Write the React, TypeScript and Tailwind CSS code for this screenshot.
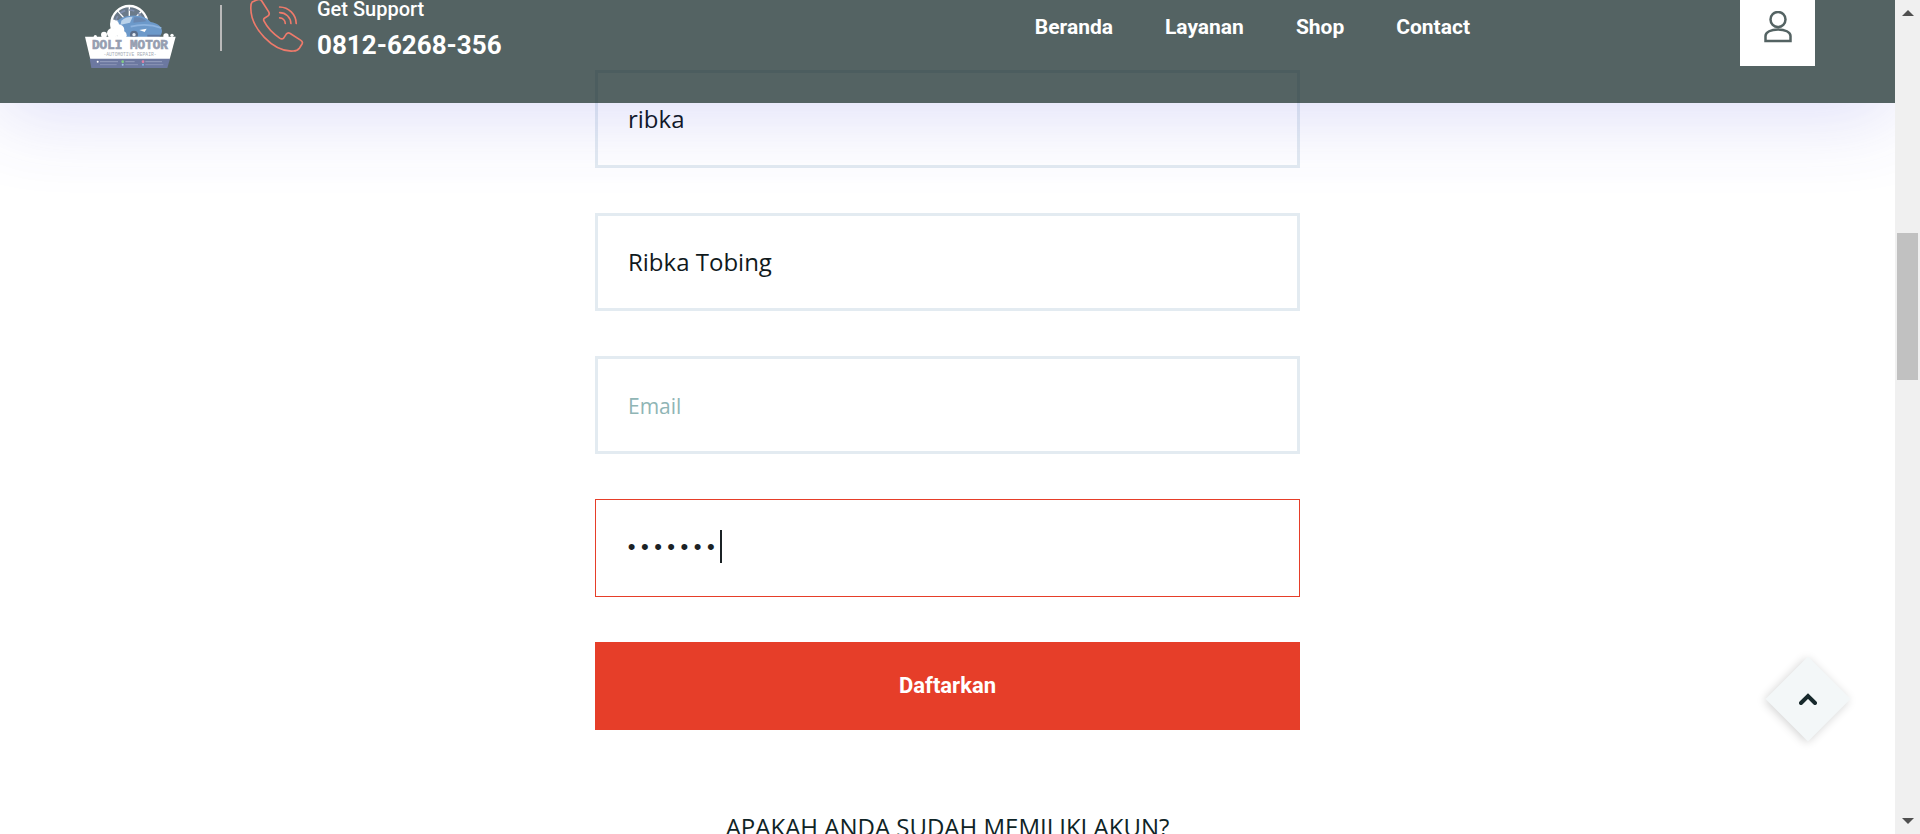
import { useState } from "react";

const navLinks = ["Beranda", "Layanan", "Shop", "Contact"];

const fieldClass =
  "block h-[98px] w-full border-[3px] border-[#e3ebf1] bg-white px-[30px] pb-0.5 font-['Open_Sans',sans-serif] text-2xl text-[#10191c] outline-none placeholder:text-[21px] placeholder:text-[#8fb5b5]";

function Logo() {
  return (
    <svg viewBox="0 0 276 192" className="h-16 w-[92px]" role="img" aria-label="Doli Motor">
      <circle cx="136" cy="60" r="54" fill="#4d6490" fillOpacity="0.5" stroke="#fff" strokeWidth="7" />
      <g stroke="#fff" strokeWidth="4">
        <path d="M136 60V8M136 60L100 20M136 60L174 20M136 60L84 48M136 60L188 44" />
      </g>
      <circle cx="136" cy="60" r="42" fill="none" stroke="#4a5f8c" strokeWidth="5" strokeDasharray="16 12" />
      <path d="M98 52c12-10 20-14 34-16 34-6 56 4 68 18 20 4 32 12 34 26 0 12-8 20-22 22l-64 4-44-16z" fill="#2f6fb5" />
      <path d="M112 50c10-10 22-12 34-12l-8 18-28 6z" fill="#9dbfe2" />
      <path d="M150 40c16-2 28 2 38 12l-40 4z" fill="#2a5590" />
      <path d="M140 68c30-8 60-8 92 4" fill="none" stroke="#5d94d2" strokeWidth="5" />
      <path d="M166 78l22-4-6 10z" fill="#fff" />
      <circle cx="150" cy="92" r="12" fill="#173059" />
      <circle cx="150" cy="92" r="5" fill="#dfe8f2" />
      <path d="M190 92h40l-6 10h-34z" fill="#183d78" />
      <g fill="#fff">
        <circle cx="92" cy="62" r="13" />
        <circle cx="104" cy="78" r="17" />
        <circle cx="84" cy="88" r="15" />
        <circle cx="114" cy="94" r="14" />
        <circle cx="60" cy="92" r="9" />
        <circle cx="34" cy="98" r="5" />
        <circle cx="246" cy="96" r="8" />
        <circle cx="264" cy="94" r="5" />
      </g>
      <path d="M3 98h272l-18 68H19z" fill="#fff" />
      <path d="M17 164h241l-8 28H22z" fill="#2f3f78" />
      <text x="138" y="136" textAnchor="middle" fontSize="38" fontWeight="700" fontFamily="Liberation Mono, monospace" fill="#6a7690" stroke="#6a7690" strokeWidth="2">
        DOLI MOTOR
      </text>
      <text x="138" y="155" textAnchor="middle" fontSize="14" fontFamily="Liberation Mono, monospace" fill="#7d8794">
        -AUTOMOTIVE REPAIR-
      </text>
      <g strokeWidth="3">
        <path d="M48 173h54M124 173h28M184 173h50" stroke="#6b78a4" />
        <path d="M48 182h50M124 182h38M184 182h54" stroke="#5a6797" />
      </g>
      <circle cx="41" cy="173" r="3" fill="#fff" />
      <circle cx="116" cy="173" r="4" fill="#4cbb50" />
      <circle cx="116" cy="182" r="3" fill="#7fb2e0" />
      <circle cx="177" cy="173" r="4" fill="#d44c80" />
      <circle cx="177" cy="182" r="3" fill="#4aa3dd" />
    </svg>
  );
}

function PhoneIcon() {
  return (
    <svg viewBox="567 0 165 160" className="h-[53px] w-[55px]" fill="none" stroke="#e8432d" strokeWidth="5" strokeLinejoin="round" strokeLinecap="round" aria-hidden="true">
      <path d="M576 6L590 0Q600-4 605 3L626 36Q630 43 624 48L613 55Q609 58 612 64C622 84 640 102 659 115Q666 120 671 115L679 103Q684 97 691 101L722 121Q730 126 727 132L719 145Q713 154 700 154C640 158 570 84 572 22Q572 10 576 6Z" />
      <path d="M659 54A17 17 0 0 1 676 71M659 38A34 34 0 0 1 693 71M659 21A51 51 0 0 1 709 71" />
    </svg>
  );
}

function UserIcon() {
  return (
    <svg viewBox="0 0 28 32" className="h-8 w-7" fill="none" stroke="#0d2222" strokeWidth="2.5" aria-hidden="true">
      <circle cx="14" cy="8.500" r="7.5" />
      <path d="M1.5 30V25C1.500 21 7 18.500 14 18.500S26.500 21 26.500 25V30Z" />
    </svg>
  );
}

function Header() {
  return (
    <header className="absolute inset-x-0 top-0 z-10 flex h-[103px] items-start bg-[#0d2222] pr-20 pl-[84px] font-[Roboto,sans-serif] text-white opacity-70 shadow-[0_10px_80px_0_rgba(50,50,220,0.24)]">
      <a href="#" className="mt-1 shrink-0">
        <Logo />
      </a>
      <div className="mt-[5px] ml-11 h-[46px] w-0.5 shrink-0 bg-[#9d9d9d]" />
      <div className="ml-[27px] flex shrink-0 items-start gap-[13px]">
        <PhoneIcon />
        <div>
          <div className="h-[27px] text-xl leading-[18px] font-medium">Get Support</div>
          <a href="tel:08126268356" className="block text-[26px] leading-9 font-bold">
            0812-6268-356
          </a>
        </div>
      </div>
      <nav className="mt-3 mr-[270px] ml-auto flex gap-[52px] text-[21px] leading-[30px] font-bold">
        {navLinks.map((label) => (
          <a key={label} href="#">
            {label}
          </a>
        ))}
      </nav>
      <button type="button" aria-label="Akun" className="flex h-[66px] w-[75px] shrink-0 items-start justify-center bg-white pt-[11px]">
        <UserIcon />
      </button>
    </header>
  );
}

function Scrollbar() {
  return (
    <div className="flex w-[25px] shrink-0 flex-col items-center justify-between bg-[#f0f0f0] py-2.5" aria-hidden="true">
      <svg viewBox="0 0 12 6" className="h-1.5 w-3" fill="#505050">
        <path d="M6 0L12 6H0Z" />
      </svg>
      <div className="flex w-[21px] flex-1 flex-col">
        <div className="basis-[217px]" />
        <div className="h-[147px] bg-[#c1c1c1]" />
      </div>
      <svg viewBox="0 0 12 6" className="h-1.5 w-3" fill="#505050">
        <path d="M6 6L12 0H0Z" />
      </svg>
    </div>
  );
}

export default function App() {
  const [username, setUsername] = useState("ribka");
  const [name, setName] = useState("Ribka Tobing");
  const [email, setEmail] = useState("");
  const [password, setPassword] = useState("rahasia");

  return (
    <div className="flex h-screen overflow-hidden bg-white">
      <div className="relative min-w-0 flex-1 overflow-hidden">
        <Header />
        <main className="mx-auto max-w-[705px] pt-[70px]">
          <form className="flex flex-col gap-[45px]" onSubmit={(e) => e.preventDefault()}>
            <input aria-label="Username" className={fieldClass} value={username} onChange={(e) => setUsername(e.target.value)} />
            <input aria-label="Nama" className={fieldClass} value={name} onChange={(e) => setName(e.target.value)} />
            <input aria-label="Email" type="email" placeholder="Email" className={fieldClass} value={email} onChange={(e) => setEmail(e.target.value)} />
            <div className="relative">
              <input
                aria-label="Password"
                type="password"
                className="block h-[98px] w-full border border-[#e63e29] bg-white px-[29px] font-['Liberation_Mono',monospace] text-[22px] text-[#1b2225] caret-transparent outline-none"
                value={password}
                onChange={(e) => setPassword(e.target.value)}
              />
              <span className="absolute top-[31px] left-[125px] h-[33px] w-0.5 bg-[#1b2225]" />
            </div>
            <button type="submit" className="h-[88px] bg-[#e63e29] pb-0.5 font-[Roboto,sans-serif] text-[22px] font-bold text-white">
              Daftarkan
            </button>
          </form>
          <p className="mt-[81px] text-center font-['Open_Sans',sans-serif] text-2xl leading-8 whitespace-nowrap text-[#0f2426]">
            APAKAH ANDA SUDAH MEMILIKI AKUN?
          </p>
        </main>
        <button type="button" aria-label="Kembali ke atas" className="absolute right-[57px] bottom-[105px] z-10 flex size-[60px] rotate-45 items-center justify-center bg-[#f3f7f8] shadow-[0_2px_10px_rgba(0,0,0,0.18)]">
          <svg viewBox="0 0 18 12" className="h-3 w-[18px] -rotate-45" fill="none" stroke="#17292c" strokeWidth="4" strokeLinecap="round" aria-hidden="true">
            <path d="M2 10L9 3L16 10" />
          </svg>
        </button>
      </div>
      <Scrollbar />
    </div>
  );
}
